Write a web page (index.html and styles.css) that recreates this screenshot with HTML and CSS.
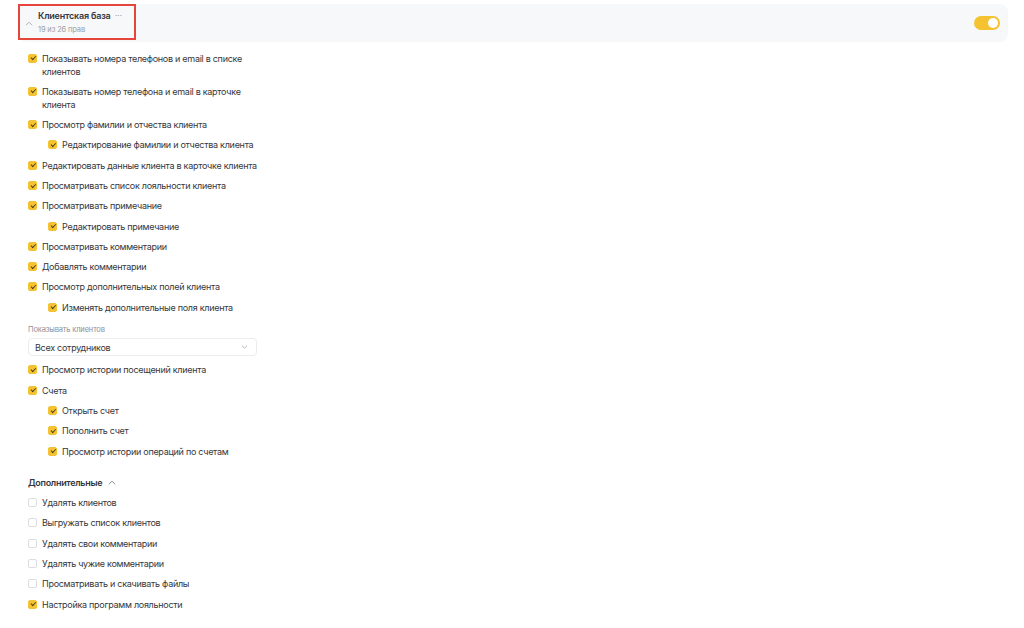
FILE: index.html
```html
<!DOCTYPE html>
<html lang="ru">
<head>
  <meta charset="UTF-8" />
  <meta name="viewport" content="width=device-width, initial-scale=1.0" />
  <title>Клиентская база</title>
  <link rel="stylesheet" href="styles.css">
</head>
<body>

<div class="section-head">
  <div class="head-title-box">
    <svg class="head-chevron" width="8" height="5" viewBox="0 0 8 5"><path d="M1 4.2 L4 1.2 L7 4.2" fill="none" stroke="#a3a6ad" stroke-width="0.9"/></svg>
    <div class="head-texts">
      <div class="head-title">Клиентская база <span class="head-more">···</span></div>
      <div class="head-sub">19 из 26 прав</div>
    </div>
  </div>
  <div class="toggle on"><span class="knob"></span></div>
</div>

<div class="perm-list">
  <label class="perm"><span class="box checked"></span><span class="perm-text">Показывать номера телефонов и email в списке клиентов</span></label>
  <label class="perm"><span class="box checked"></span><span class="perm-text">Показывать номер телефона и email в карточке клиента</span></label>
  <label class="perm"><span class="box checked"></span><span class="perm-text">Просмотр фамилии и отчества клиента</span></label>
  <label class="perm sub"><span class="box checked"></span><span class="perm-text">Редактирование фамилии и отчества клиента</span></label>
  <label class="perm"><span class="box checked"></span><span class="perm-text">Редактировать данные клиента в карточке клиента</span></label>
  <label class="perm"><span class="box checked"></span><span class="perm-text">Просматривать список лояльности клиента</span></label>
  <label class="perm"><span class="box checked"></span><span class="perm-text">Просматривать примечание</span></label>
  <label class="perm sub"><span class="box checked"></span><span class="perm-text">Редактировать примечание</span></label>
  <label class="perm"><span class="box checked"></span><span class="perm-text">Просматривать комментарии</span></label>
  <label class="perm"><span class="box checked"></span><span class="perm-text">Добавлять комментарии</span></label>
  <label class="perm"><span class="box checked"></span><span class="perm-text">Просмотр дополнительных полей клиента</span></label>
  <label class="perm sub"><span class="box checked"></span><span class="perm-text">Изменять дополнительные поля клиента</span></label>

  <div class="field">
    <div class="field-label">Показывать клиентов</div>
    <div class="select">
      <span>Всех сотрудников</span>
      <svg width="7" height="4" viewBox="0 0 7 4"><path d="M1 0.8 L3.5 3.2 L6 0.8" fill="none" stroke="#a3a6ad" stroke-width="0.8"/></svg>
    </div>
  </div>

  <label class="perm"><span class="box checked"></span><span class="perm-text">Просмотр истории посещений клиента</span></label>
  <label class="perm"><span class="box checked"></span><span class="perm-text">Счета</span></label>
  <label class="perm sub"><span class="box checked"></span><span class="perm-text">Открыть счет</span></label>
  <label class="perm sub"><span class="box checked"></span><span class="perm-text">Пополнить счет</span></label>
  <label class="perm sub"><span class="box checked"></span><span class="perm-text">Просмотр истории операций по счетам</span></label>

  <div class="group-title">Дополнительные
    <svg width="8" height="5" viewBox="0 0 8 5"><path d="M1 4.2 L4 1.2 L7 4.2" fill="none" stroke="#7d8088" stroke-width="0.9"/></svg>
  </div>

  <label class="perm"><span class="box"></span><span class="perm-text">Удалять клиентов</span></label>
  <label class="perm"><span class="box"></span><span class="perm-text">Выгружать список клиентов</span></label>
  <label class="perm"><span class="box"></span><span class="perm-text">Удалять свои комментарии</span></label>
  <label class="perm"><span class="box"></span><span class="perm-text">Удалять чужие комментарии</span></label>
  <label class="perm"><span class="box"></span><span class="perm-text">Просматривать и скачивать файлы</span></label>
  <label class="perm"><span class="box checked"></span><span class="perm-text">Настройка программ лояльности</span></label>
</div>

</body>
</html>
```

FILE: styles.css
```css
* {
  box-sizing: border-box;
}

body {
  margin: 0;
  background: #fff;
  font-family: Inter, "Noto Sans", sans-serif;
  color: #35373c;
}

.section-head {
  margin: 4px 16px 0 18px;
  height: 38px;
  background: #f7f8fa;
  border-radius: 8px;
  display: flex;
  align-items: center;
  justify-content: space-between;
  padding-right: 8px;
}

.head-title-box {
  width: 118px;
  height: 36px;
  align-self: flex-start;
  border: 2px solid #e5453b;
  display: flex;
  align-items: center;
  padding-left: 5px;
  gap: 5px;
}

.head-chevron {
  margin-top: 2px;
}

.head-texts {
  display: flex;
  flex-direction: column;
  gap: 4px;
  margin-top: -1px;
}

.head-title {
  font-size: 9px;
  font-weight: 600;
  letter-spacing: -0.2px;
  color: #35373c;
  line-height: 11px;
}

.head-more {
  color: #9a9da4;
  font-weight: 400;
  margin-left: 2px;
}

.head-sub {
  font-size: 7.5px;
  letter-spacing: -0.15px;
  color: #9a9da4;
  line-height: 9px;
}

.toggle {
  width: 26px;
  height: 14px;
  border-radius: 7px;
  background: #dcdde0;
  position: relative;
}

.toggle.on {
  background: #f5c232;
}

.knob {
  position: absolute;
  top: 2px;
  right: 2px;
  width: 10px;
  height: 10px;
  border-radius: 50%;
  background: #fff;
}

.perm-list {
  width: 229px;
  margin: 9.5px 0 0 28px;
  display: flex;
  flex-direction: column;
  gap: 7.3px;
}

.perm {
  display: flex;
  align-items: flex-start;
  gap: 5px;
  font-size: 9px;
  letter-spacing: -0.28px;
  line-height: 13px;
  color: #35373c;
}

.perm.sub {
  margin-left: 20px;
}

.box {
  flex: none;
  width: 9px;
  height: 9px;
  margin-top: 2px;
  border-radius: 2px;
  border: 1px solid #dcdde1;
  background: #fff;
  position: relative;
}

.box.checked {
  background: #f5c232;
  border-color: #f5c232;
}

.box.checked::after {
  content: "";
  position: absolute;
  left: 2px;
  top: 1.6px;
  width: 3.5px;
  height: 2px;
  border-left: 1px solid #4a3f1e;
  border-bottom: 1px solid #4a3f1e;
  transform: rotate(-45deg);
}

.field {
  margin-top: 4px;
}

.field-label {
  font-size: 7.5px;
  letter-spacing: -0.15px;
  line-height: 10px;
  color: #8e9198;
  margin-bottom: 3px;
}

.select {
  height: 18px;
  border: 1px solid #ececee;
  border-radius: 4px;
  display: flex;
  align-items: center;
  justify-content: space-between;
  padding: 0 8px 0 6px;
  font-size: 9px;
  letter-spacing: -0.28px;
  color: #35373c;
}

.group-title {
  margin-top: 11px;
  font-size: 9px;
  font-weight: 600;
  letter-spacing: -0.3px;
  line-height: 13px;
  color: #35373c;
  display: flex;
  align-items: center;
  gap: 6px;
}
```
